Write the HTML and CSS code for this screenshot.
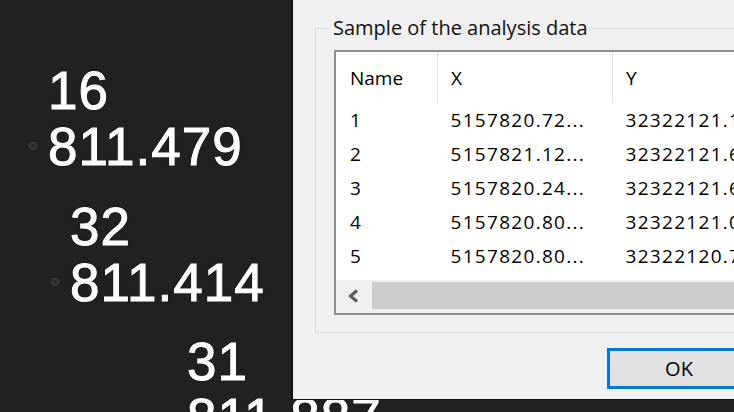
FILE: index.html
```html
<!DOCTYPE html>
<html lang="en">
<head>
  <meta charset="UTF-8" />
  <title>Sample of the analysis data</title>
  <link rel="stylesheet" href="styles.css">
</head>
<body>
  <div class="map">
    <div class="label label-a"><span class="pin"></span>16<br>811.479</div>
    <div class="label label-b"><span class="pin"></span>32<br>811.414</div>
    <div class="label label-c"><span class="pin"></span>31<br>811.887</div>
  </div>

  <div class="dialog">
    <fieldset class="group">
      <legend>Sample of the analysis data</legend>
      <div class="listview">
        <div class="grid-wrap">
          <table class="grid">
            <thead>
              <tr><th class="col-name">Name</th><th class="col-x">X</th><th class="col-y">Y</th></tr>
            </thead>
            <tbody>
              <tr><td>1</td><td class="num">5157820.72...</td><td class="num">32322121.1...</td></tr>
              <tr><td>2</td><td class="num">5157821.12...</td><td class="num">32322121.6...</td></tr>
              <tr><td>3</td><td class="num">5157820.24...</td><td class="num">32322121.6...</td></tr>
              <tr><td>4</td><td class="num">5157820.80...</td><td class="num">32322121.0...</td></tr>
              <tr><td>5</td><td class="num">5157820.80...</td><td class="num">32322120.7...</td></tr>
              <tr><td>6</td><td class="num">5157820.91...</td><td class="num">32322120.4...</td></tr>
            </tbody>
          </table>
        </div>
        <div class="hscroll">
          <span class="arrow">
            <svg width="14" height="14" viewBox="0 0 14 14"><polyline points="10,1.5 3.5,7 10,12.5" fill="none" stroke="#5a5a5a" stroke-width="3"/></svg>
          </span>
          <span class="thumb"></span>
        </div>
      </div>
    </fieldset>
    <div class="buttons">
      <button class="btn-ok">OK</button>
    </div>
  </div>
</body>
</html>
```

FILE: styles.css
```css
body {
  margin: 0;
  width: 734px;
  height: 412px;
  overflow: hidden;
  position: relative;
  background-color: #212121;
  font-family: 'Open Sans', 'Liberation Sans', sans-serif;
  color: #000;
}

/* --- map labels behind the dialog --- */
.map {
  position: absolute;
  inset: 0;
}
.label {
  position: absolute;
  font-family: 'Liberation Sans', Arial, sans-serif;
  font-size: 53px;
  line-height: 56px;
  letter-spacing: 1px;
  color: #fff;
  white-space: nowrap;
  -webkit-text-stroke: 1px #fff;
  text-shadow: 0 0 2px #000, 0 0 1px #000;
}
.label-a { left: 48px; top: 63px; }
.label-b { left: 70px; top: 199px; }
.label-c { left: 187px; top: 334px; }
.pin {
  position: absolute;
  left: -19px;
  top: 79px;
  width: 6px;
  height: 6px;
  border: 1px solid #4a4a4a;
  border-radius: 50%;
  background-color: #2c2c2c;
  -webkit-text-stroke: 0;
}

/* --- dialog window --- */
.dialog {
  position: absolute;
  left: 291px;
  top: 0;
  width: 470px;
  height: 399px;
  background-color: #f0f0f0;
  border-left: 2px solid #111;
  border-bottom: 1px solid #111;
  display: flex;
  flex-direction: column;
}
.group {
  margin: 16px 12px 0 22px;
  padding: 10px 0 17px 18px;
  border: 1px solid #d9d9d9;
  min-width: 0;
}
.group legend {
  margin-left: -4px;
  padding: 0 3px;
  font-size: 20px;
  line-height: 24px;
  color: #111;
}
.listview {
  height: 261px;
  border: 2px solid #8e8e8e;
  border-right: none;
  background-color: #fff;
  display: flex;
  flex-direction: column;
}
.grid-wrap {
  flex: 1;
  overflow: hidden;
}
.grid {
  border-collapse: collapse;
  table-layout: fixed;
  width: 460px;
  font-size: 19px;
}
.grid th {
  height: 51px;
  padding: 0 0 0 13px;
  text-align: left;
  font-weight: normal;
  border-right: 1px solid #e3e3e3;
}
.grid td {
  height: 34px;
  padding: 0 0 0 13px;
  white-space: nowrap;
  overflow: hidden;
}
.grid .col-name { width: 87px; padding-left: 14px; }
.grid .col-x { width: 161px; }
.grid .col-y { width: 171px; }
.grid td:first-child { padding-left: 14px; }
.num {
  letter-spacing: 1.3px;
}
.hscroll {
  height: 33px;
  padding: 2px 0 4px;
  box-sizing: border-box;
  display: flex;
  background-color: #f0f0f0;
}
.arrow {
  width: 36px;
  display: flex;
  align-items: center;
  justify-content: center;
}
.thumb {
  flex: 1;
  background-color: #cdcdcd;
}

/* --- buttons --- */
.buttons {
  display: flex;
  justify-content: flex-end;
  margin: 15px 12px 0 0;
}
.btn-ok {
  width: 144px;
  height: 41px;
  font-family: 'Open Sans', 'Liberation Sans', sans-serif;
  font-size: 20px;
  color: #000;
  background-color: #e1e1e1;
  border: 3px solid #0078d7;
  padding: 0;
}
```
